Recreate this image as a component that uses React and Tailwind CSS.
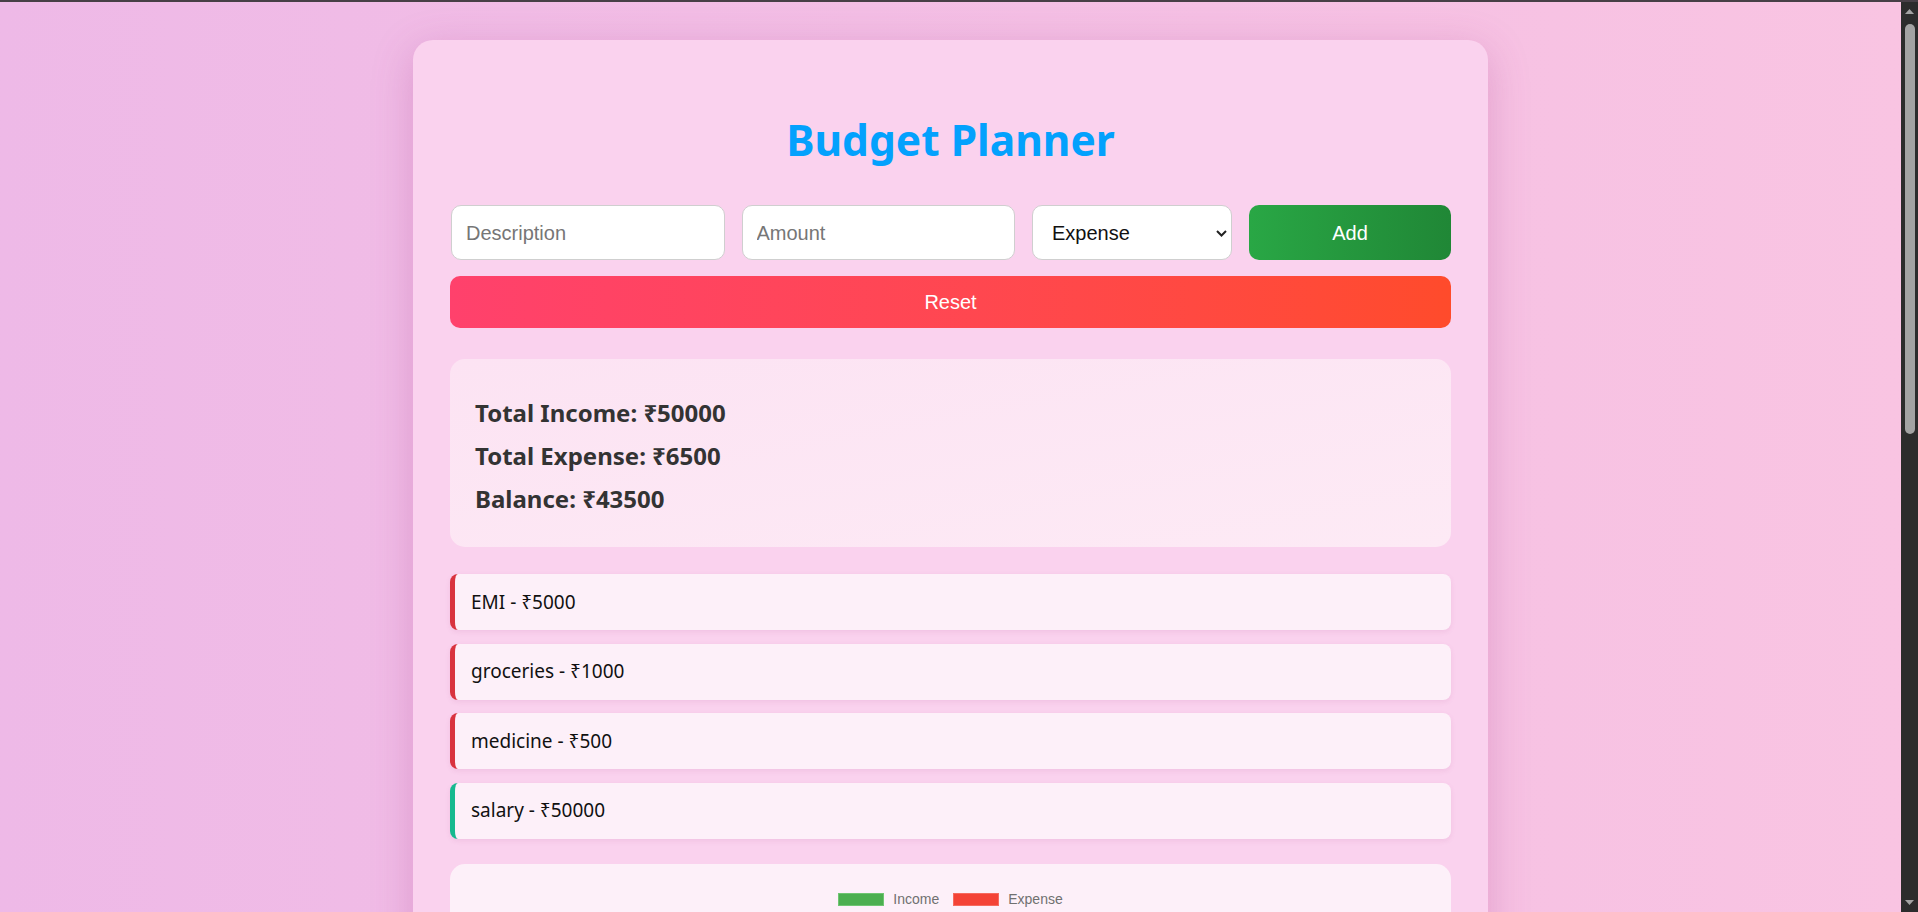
import React from 'react';

const items = [
  { label: 'EMI - ₹5000', type: 'expense' },
  { label: 'groceries - ₹1000', type: 'expense' },
  { label: 'medicine - ₹500', type: 'expense' },
  { label: 'salary - ₹50000', type: 'income' },
];

const FakeScrollbar = () => (
  <div className="relative w-[17px] bg-[#2c2c2c]">
    <svg className="absolute left-[4px] top-[6px]" width="9" height="6" viewBox="0 0 9 6">
      <path d="M0 6 L4.5 1 L9 6 Z" fill="#a3a3a3" />
    </svg>
    <div className="absolute left-[4px] top-[22px] h-[410px] w-[10px] rounded-[5px] bg-[#a3a3a3]" />
    <svg className="absolute left-[4px] bottom-[6px]" width="9" height="6" viewBox="0 0 9 6">
      <path d="M0 0 L9 0 L4.5 5 Z" fill="#a3a3a3" />
    </svg>
  </div>
);

const App = () => (
  <div className="flex h-[912px] w-[1918px] flex-col overflow-hidden">
    <div className="h-[2px] w-full bg-[#473f46]" />
    <div className="flex flex-1 overflow-hidden">
      {/* Page */}
      <div className="flex-1 overflow-hidden bg-gradient-to-r from-[#eeb9e7] to-[#f9c4e2] pt-[38px]">
        <div className="mx-auto w-[1075px] rounded-[20px] bg-[#fad2ee] px-[37px] pt-[37px] pb-[40px] shadow-[0_10px_40px_rgba(170,60,140,0.28)]">
          {/* Title */}
          <h1 className="mt-[33px] mb-[35px] flex h-[60px] items-center justify-center font-['Segoe_UI','Noto_Sans',sans-serif] text-[42.5px] font-bold text-[#03a1fd]">
            Budget Planner
          </h1>

          {/* Form */}
          <div className="flex h-[55px] gap-[17px] font-['Liberation_Sans',Arial,sans-serif] text-[20px]">
            <input
              className="ml-[1px] min-w-0 flex-1 rounded-[10px] border border-[#cfcfcf] bg-white px-[14px] text-[#222] outline-none placeholder:text-[#767676]"
              placeholder="Description"
            />
            <input
              className="min-w-0 flex-1 rounded-[10px] border border-[#cfcfcf] bg-white px-[14px] text-[#222] outline-none placeholder:text-[#767676]"
              placeholder="Amount"
            />
            <div className="relative w-[200px]">
              <select className="h-full w-full appearance-none rounded-[10px] border border-[#cfcfcf] bg-white pl-[19px] text-[#111] outline-none">
                <option>Expense</option>
                <option>Income</option>
              </select>
              <svg className="pointer-events-none absolute right-[5px] top-[25px]" width="11" height="7" viewBox="0 0 11 7">
                <path d="M1 1 L5.5 5.5 L10 1" fill="none" stroke="#222" strokeWidth="2" />
              </svg>
            </div>
            <button className="w-[202px] rounded-[10px] bg-gradient-to-r from-[#29a745] to-[#208736] text-white">
              Add
            </button>
          </div>
          <button className="mt-[16px] h-[52px] w-full rounded-[10px] bg-gradient-to-r from-[#ff416c] to-[#ff4b2b] font-['Liberation_Sans',Arial,sans-serif] text-[20px] text-white">
            Reset
          </button>

          {/* Summary */}
          <div className="mt-[31px] h-[188px] rounded-[15px] bg-gradient-to-br from-[#fce3f3] to-[#fdeaf5] px-[25px] pt-[32px] font-['Segoe_UI','Noto_Sans',sans-serif] text-[24px] font-bold text-[#333]">
            <div className="leading-[43px]">Total Income: ₹50000</div>
            <div className="leading-[43px]">Total Expense: ₹6500</div>
            <div className="leading-[43px]">Balance: ₹43500</div>
          </div>

          {/* Transactions */}
          <div className="mt-[27px] flex flex-col gap-[13.5px] font-['Segoe_UI','Noto_Sans',sans-serif] text-[19px] text-[#111]">
            {items.map((it) => (
              <div
                key={it.label}
                className={
                  it.type === 'income'
                    ? 'flex h-[56px] items-center rounded-[8px] border-l-[5px] border-[#16b98f] bg-[#fdf0f9] pl-[16px] shadow-[0_2px_5px_rgba(180,80,150,0.12)]'
                    : 'flex h-[56px] items-center rounded-[8px] border-l-[5px] border-[#d9333f] bg-[#fdf0f9] pl-[16px] shadow-[0_2px_5px_rgba(180,80,150,0.12)]'
                }
              >
                {it.label}
              </div>
            ))}
          </div>

          {/* Chart */}
          <div className="mt-[25px] h-[320px] rounded-[15px] bg-[#fdf0f9] pt-[25px]">
            <div className="flex items-center justify-center gap-[10px] font-['Liberation_Sans',Arial,sans-serif] text-[14px] text-[#707070]">
              <div className="flex items-center gap-[9px]">
                <span className="h-[13px] w-[46px] border border-[#6fc572] bg-[#4caf50]" />
                <span>Income</span>
              </div>
              <div className="ml-[4px] flex items-center gap-[9px]">
                <span className="h-[13px] w-[46px] border border-[#f66a5e] bg-[#f44336]" />
                <span>Expense</span>
              </div>
            </div>
          </div>
        </div>
      </div>
      <FakeScrollbar />
    </div>
  </div>
);

export default App;
